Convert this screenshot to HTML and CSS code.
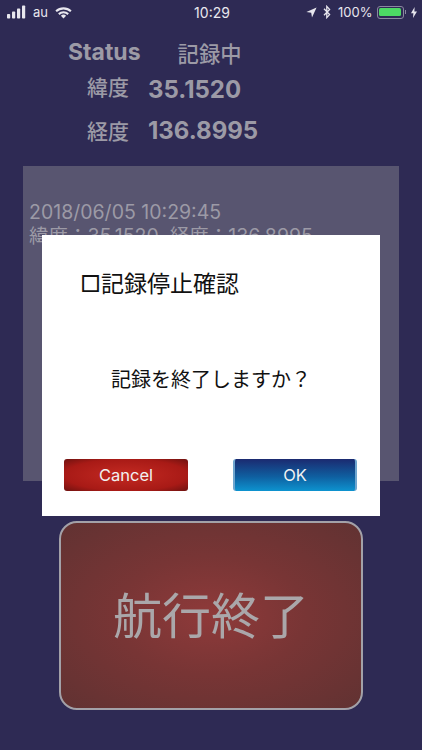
FILE: index.html
```html
<!DOCTYPE html>
<html lang="ja">
<head>
    <meta charset="UTF-8" />
    <meta name="viewport" content="width=device-width, initial-scale=1.0" />
    <title>航行記録</title>
    <link rel="stylesheet" href="styles.css">
</head>
<body>
    <div class="status-bar">
        <div class="status-left">
            <svg class="signal" width="19" height="14" viewBox="0 0 19 14">
                <rect x="0" y="9" width="3.2" height="4.5" rx="0.8" />
                <rect x="5" y="6.5" width="3.2" height="7" rx="0.8" />
                <rect x="10" y="3.5" width="3.2" height="10" rx="0.8" />
                <rect x="15" y="0.5" width="3.2" height="13" rx="0.8" />
            </svg>
            <span class="carrier">au</span>
            <svg class="wifi" width="17" height="13" viewBox="0 0 17 13">
                <path d="M8.5 12.6 L5.9 9.7 A3.9 3.9 0 0 1 11.1 9.7 Z" />
                <path d="M0.4 4.4 A12 12 0 0 1 16.6 4.4 L15.2 6 A9.9 9.9 0 0 0 1.8 6 Z" />
                <path d="M3.1 7.3 A8 8 0 0 1 13.9 7.3 L12.5 8.9 A5.9 5.9 0 0 0 4.5 8.9 Z" />
            </svg>
        </div>
        <div class="status-time">10:29</div>
        <div class="status-right">
            <svg width="11" height="11" viewBox="0 0 11 11">
                <path d="M10.6 0.4 L0.4 5 L5.2 5.8 L6 10.6 Z" />
            </svg>
            <svg class="bluetooth" width="8" height="14" viewBox="0 0 8 14">
                <path d="M1 3.8 L6.6 9.6 L3.8 12.6 V1.4 L6.6 4.4 L1 10.2" />
            </svg>
            <span class="battery-text">100%</span>
            <div class="battery"><div class="battery-level"></div></div>
            <div class="battery-cap"></div>
            <svg width="6" height="11" viewBox="0 0 6 11">
                <path d="M3.6 0 L0 6.2 H2.4 L2 11 L6 4.4 H3.4 Z" />
            </svg>
        </div>
    </div>

    <main class="screen">
        <div class="status-row">
            <span class="status-label">Status</span>
            <span class="status-value">記録中</span>
        </div>
        <div class="coord-row coord-row-lat">
            <span class="coord-label">緯度</span>
            <span class="coord-value">35.1520</span>
        </div>
        <div class="coord-row coord-row-long">
            <span class="coord-label">経度</span>
            <span class="coord-value">136.8995</span>
        </div>

        <div class="log-panel">
            <p>2018/06/05 10:29:45</p>
            <p>緯度：35.1520&nbsp;&nbsp;経度：136.8995</p>
        </div>

        <button class="finish-btn">航行終了</button>
    </main>

    <div class="modal">
        <h2 class="modal-title">□記録停止確認</h2>
        <p class="modal-text">記録を終了しますか？</p>
        <div class="modal-buttons">
            <button class="btn btn-cancel">Cancel</button>
            <button class="btn btn-ok">OK</button>
        </div>
    </div>
</body>
</html>
```

FILE: styles.css
```css
:root {
    --primary-bg: #2e2a54;
    --text-grey: #9c9aa6;
    --jp-font: "Inter", "Noto Sans CJK JP", sans-serif;
}

* {
    margin: 0;
    padding: 0;
    box-sizing: border-box;
}

body {
    position: relative;
    width: 422px;
    height: 750px;
    overflow: hidden;
    background-color: var(--primary-bg);
    font-family: var(--jp-font);
    color: var(--text-grey);
}

.status-bar {
    display: grid;
    grid-template-columns: 1fr auto 1fr;
    align-items: center;
    height: 24px;
    padding: 0 5px 0 7px;
    color: #e8e7ee;
    font-family: "Inter", sans-serif;
    font-size: 13px;
}

.status-bar svg {
    fill: #e8e7ee;
    display: block;
}

.status-left {
    display: flex;
    align-items: center;
    gap: 7px;
}

.status-time {
    font-size: 14px;
}

.status-right {
    display: flex;
    align-items: center;
    justify-content: flex-end;
    gap: 6px;
}

.status-bar .bluetooth {
    fill: none;
    stroke: #e8e7ee;
    stroke-width: 1.3;
}

.battery-text {
    margin-left: 1px;
    margin-right: -2px;
}

.battery {
    width: 27px;
    height: 13px;
    padding: 1.5px;
    border: 1px solid #8a88a0;
    border-radius: 3px;
}

.battery-level {
    height: 100%;
    background: #4cd964;
    border-radius: 1.5px;
}

.battery-cap {
    width: 1.5px;
    height: 4px;
    margin-left: -5px;
    margin-right: -1px;
    background: #8a88a0;
}

.screen {
    display: flex;
    flex-direction: column;
}

.status-row {
    display: flex;
    align-items: center;
    height: 30px;
    margin-top: 13px;
    padding-left: 68px;
    font-size: 23px;
    font-weight: 700;
}

.status-value {
    margin-left: 37px;
    font-size: 21.3px;
    font-weight: 500;
}

.coord-row {
    display: flex;
    align-items: center;
    height: 36px;
    padding-left: 87px;
}

.coord-row-lat {
    margin-top: 4px;
}

.coord-row-long {
    margin-top: 5px;
}

.coord-label {
    width: 61px;
    font-size: 21px;
    font-weight: 500;
}

.coord-row-lat .coord-label {
    position: relative;
    top: -3px;
}

.coord-value {
    font-size: 24px;
    font-weight: 700;
}

.log-panel {
    width: 376px;
    height: 315px;
    margin: 18px 0 0 23px;
    padding: 34px 6px 0;
    background: #585570;
    font-size: 19.5px;
    line-height: 24px;
}

.finish-btn {
    width: 304px;
    height: 189px;
    margin: 40px 0 0 59px;
    padding-bottom: 6px;
    border: 2px solid #a3a1a8;
    border-radius: 18px;
    background: radial-gradient(ellipse at center, #8f3a3a 0%, #783535 45%, #613232 100%);
    color: #aaa7aa;
    font-family: var(--jp-font);
    font-size: 49px;
}

.modal {
    position: absolute;
    top: 235px;
    left: 42px;
    width: 338px;
    height: 281px;
    display: flex;
    flex-direction: column;
    background: #fff;
    color: #111;
}

.modal-title {
    margin: 33px 0 0 38px;
    font-size: 23px;
    font-weight: 400;
    line-height: 32px;
}

.modal-text {
    margin-top: 66px;
    text-align: center;
    font-size: 20px;
    line-height: 28px;
}

.modal-buttons {
    display: flex;
    justify-content: space-between;
    margin-top: 65px;
    padding: 0 23px 0 22px;
}

.btn {
    width: 124px;
    height: 32px;
    border: none;
    border-radius: 3px;
    color: #f2f2f2;
    font-family: "Inter", sans-serif;
    font-size: 16.5px;
}

.btn-cancel {
    background: radial-gradient(ellipse at center, #c42a22 0%, #a81a16 70%, #6e1210 100%);
}

.btn-ok {
    background: linear-gradient(to bottom, #1b2a70 0%, #0f5fa0 55%, #0d93cf 100%);
    border-left: 2px solid #6fa6cf;
    border-right: 2px solid #6fa6cf;
}
```
